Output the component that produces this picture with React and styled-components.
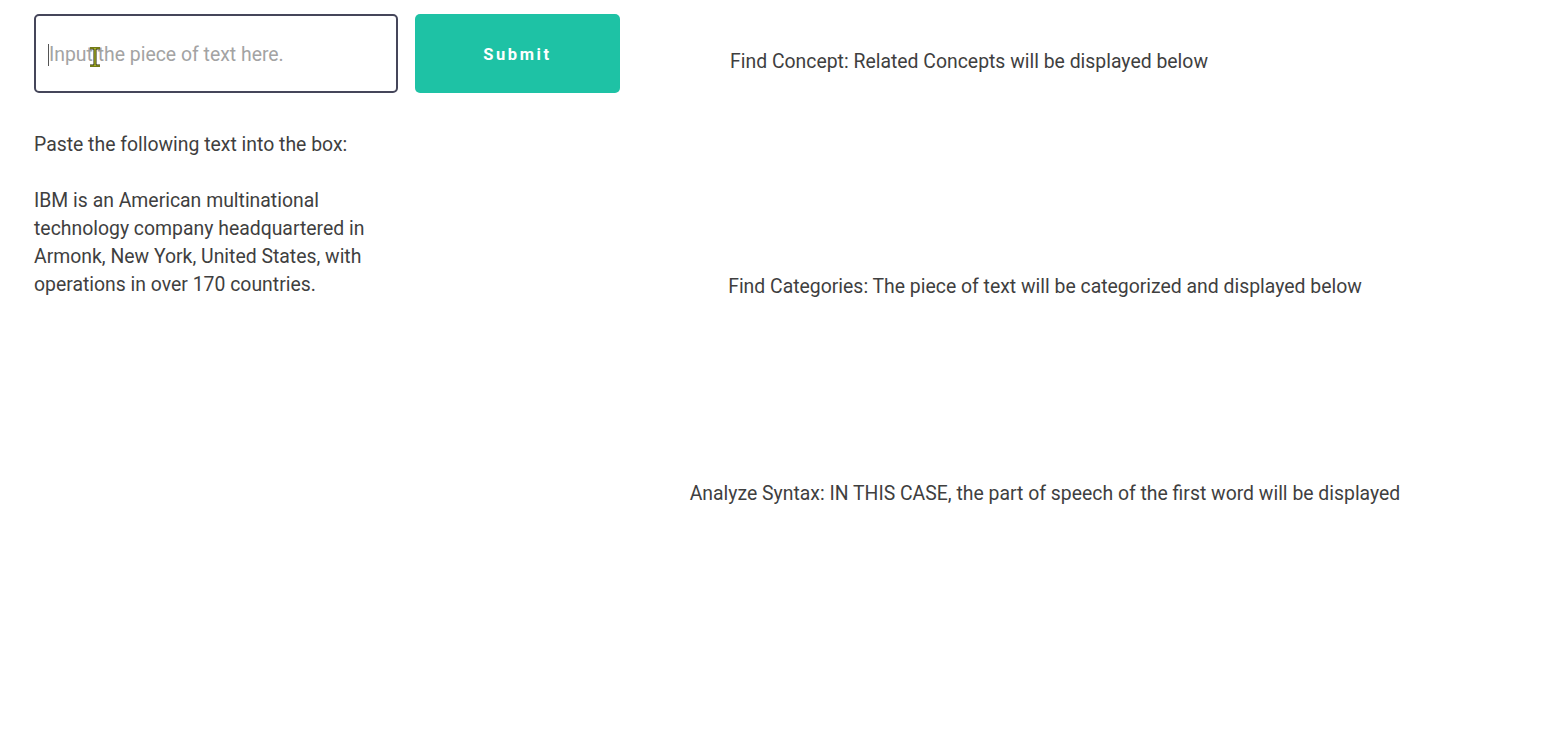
import React from "react";
import styled, { createGlobalStyle } from "styled-components";

const GlobalStyle = createGlobalStyle`
  html, body {
    margin: 0;
    padding: 0;
    background: #fff;
  }
  body {
    font-family: Roboto, "Liberation Sans", sans-serif;
    color: #3f3f3f;
  }
`;

const Page = styled.div`
  display: flex;
  padding: 14px 0 0 34px;
  min-height: 722px;
`;

const LeftCol = styled.div`
  width: 586px;
  display: flex;
  flex-direction: column;
`;

const FormRow = styled.div`
  display: flex;
  gap: 17px;
`;

const InputWrap = styled.div`
  position: relative;
  width: 364px;
  height: 79px;
`;

const TextInput = styled.input`
  box-sizing: border-box;
  width: 100%;
  height: 100%;
  border: 2px solid #45465a;
  border-radius: 5px;
  padding: 2px 13px 0;
  font-family: Roboto, "Liberation Sans", sans-serif;
  font-size: 19.4px;
  color: #333;
  outline: none;
  background: #fff;
  &::placeholder {
    color: #a3a3a3;
  }
`;

// text caret + mouse I-beam sitting over the field
const Caret = styled.span`
  position: absolute;
  left: 14px;
  top: 30px;
  width: 1px;
  height: 22px;
  background: #555;
`;

const Cursor = styled.svg`
  position: absolute;
  left: 55px;
  top: 33px;
`;

const SubmitButton = styled.button`
  width: 205px;
  height: 79px;
  border: none;
  border-radius: 5px;
  background: #1ec2a5;
  color: #fff;
  font-family: Roboto, "Liberation Sans", sans-serif;
  font-size: 16.5px;
  font-weight: 700;
  letter-spacing: 2.6px;
  padding-top: 2px;
  cursor: pointer;
`;

const Instructions = styled.div`
  margin-top: 38px;
  width: 350px;
  font-size: 19.4px;
  line-height: 28px;
`;

const Para = styled.p`
  margin: 0 0 ${(p) => (p.gap ? "28px" : "0")};
`;

const RightCol = styled.div`
  width: 790px;
  margin-left: 30px;
  padding-top: 34px;
  display: flex;
  flex-direction: column;
`;

const Section = styled.div`
  height: ${(p) => p.h}px;
  text-align: ${(p) => (p.indent ? "left" : "center")};
  padding-left: ${(p) => p.indent || 0}px;
`;

const Heading = styled.div`
  font-size: 19.4px;
  line-height: 28px;
  white-space: nowrap;
`;

export default function App() {
  return (
    <>
      <GlobalStyle />
      <Page>
        <LeftCol>
          <FormRow>
            <InputWrap>
              <TextInput placeholder="Input the piece of text here." />
              <Caret />
              <Cursor width="12" height="20" viewBox="0 0 12 20">
                <path
                  d="M1 1h10M1 19h10M6 1v18"
                  stroke="#1f1f00"
                  strokeWidth="3"
                  fill="none"
                />
                <path
                  d="M1 1h10M1 19h10M6 1v18"
                  stroke="#c8d630"
                  strokeWidth="1.2"
                  fill="none"
                />
              </Cursor>
            </InputWrap>
            <SubmitButton>Submit</SubmitButton>
          </FormRow>
          <Instructions>
            <Para gap>Paste the following text into the box:</Para>
            <Para>
              IBM is an American multinational technology company headquartered
              in Armonk, New York, United States, with operations in over 170
              countries.
            </Para>
          </Instructions>
        </LeftCol>
        <RightCol>
          <Section h={225} indent={80}>
            <Heading>Find Concept: Related Concepts will be displayed below</Heading>
          </Section>
          <Section h={207}>
            <Heading>
              Find Categories: The piece of text will be categorized and displayed below
            </Heading>
          </Section>
          <Section h={200}>
            <Heading>
              Analyze Syntax: IN THIS CASE, the part of speech of the first word will be displayed
            </Heading>
          </Section>
        </RightCol>
      </Page>
    </>
  );
}
